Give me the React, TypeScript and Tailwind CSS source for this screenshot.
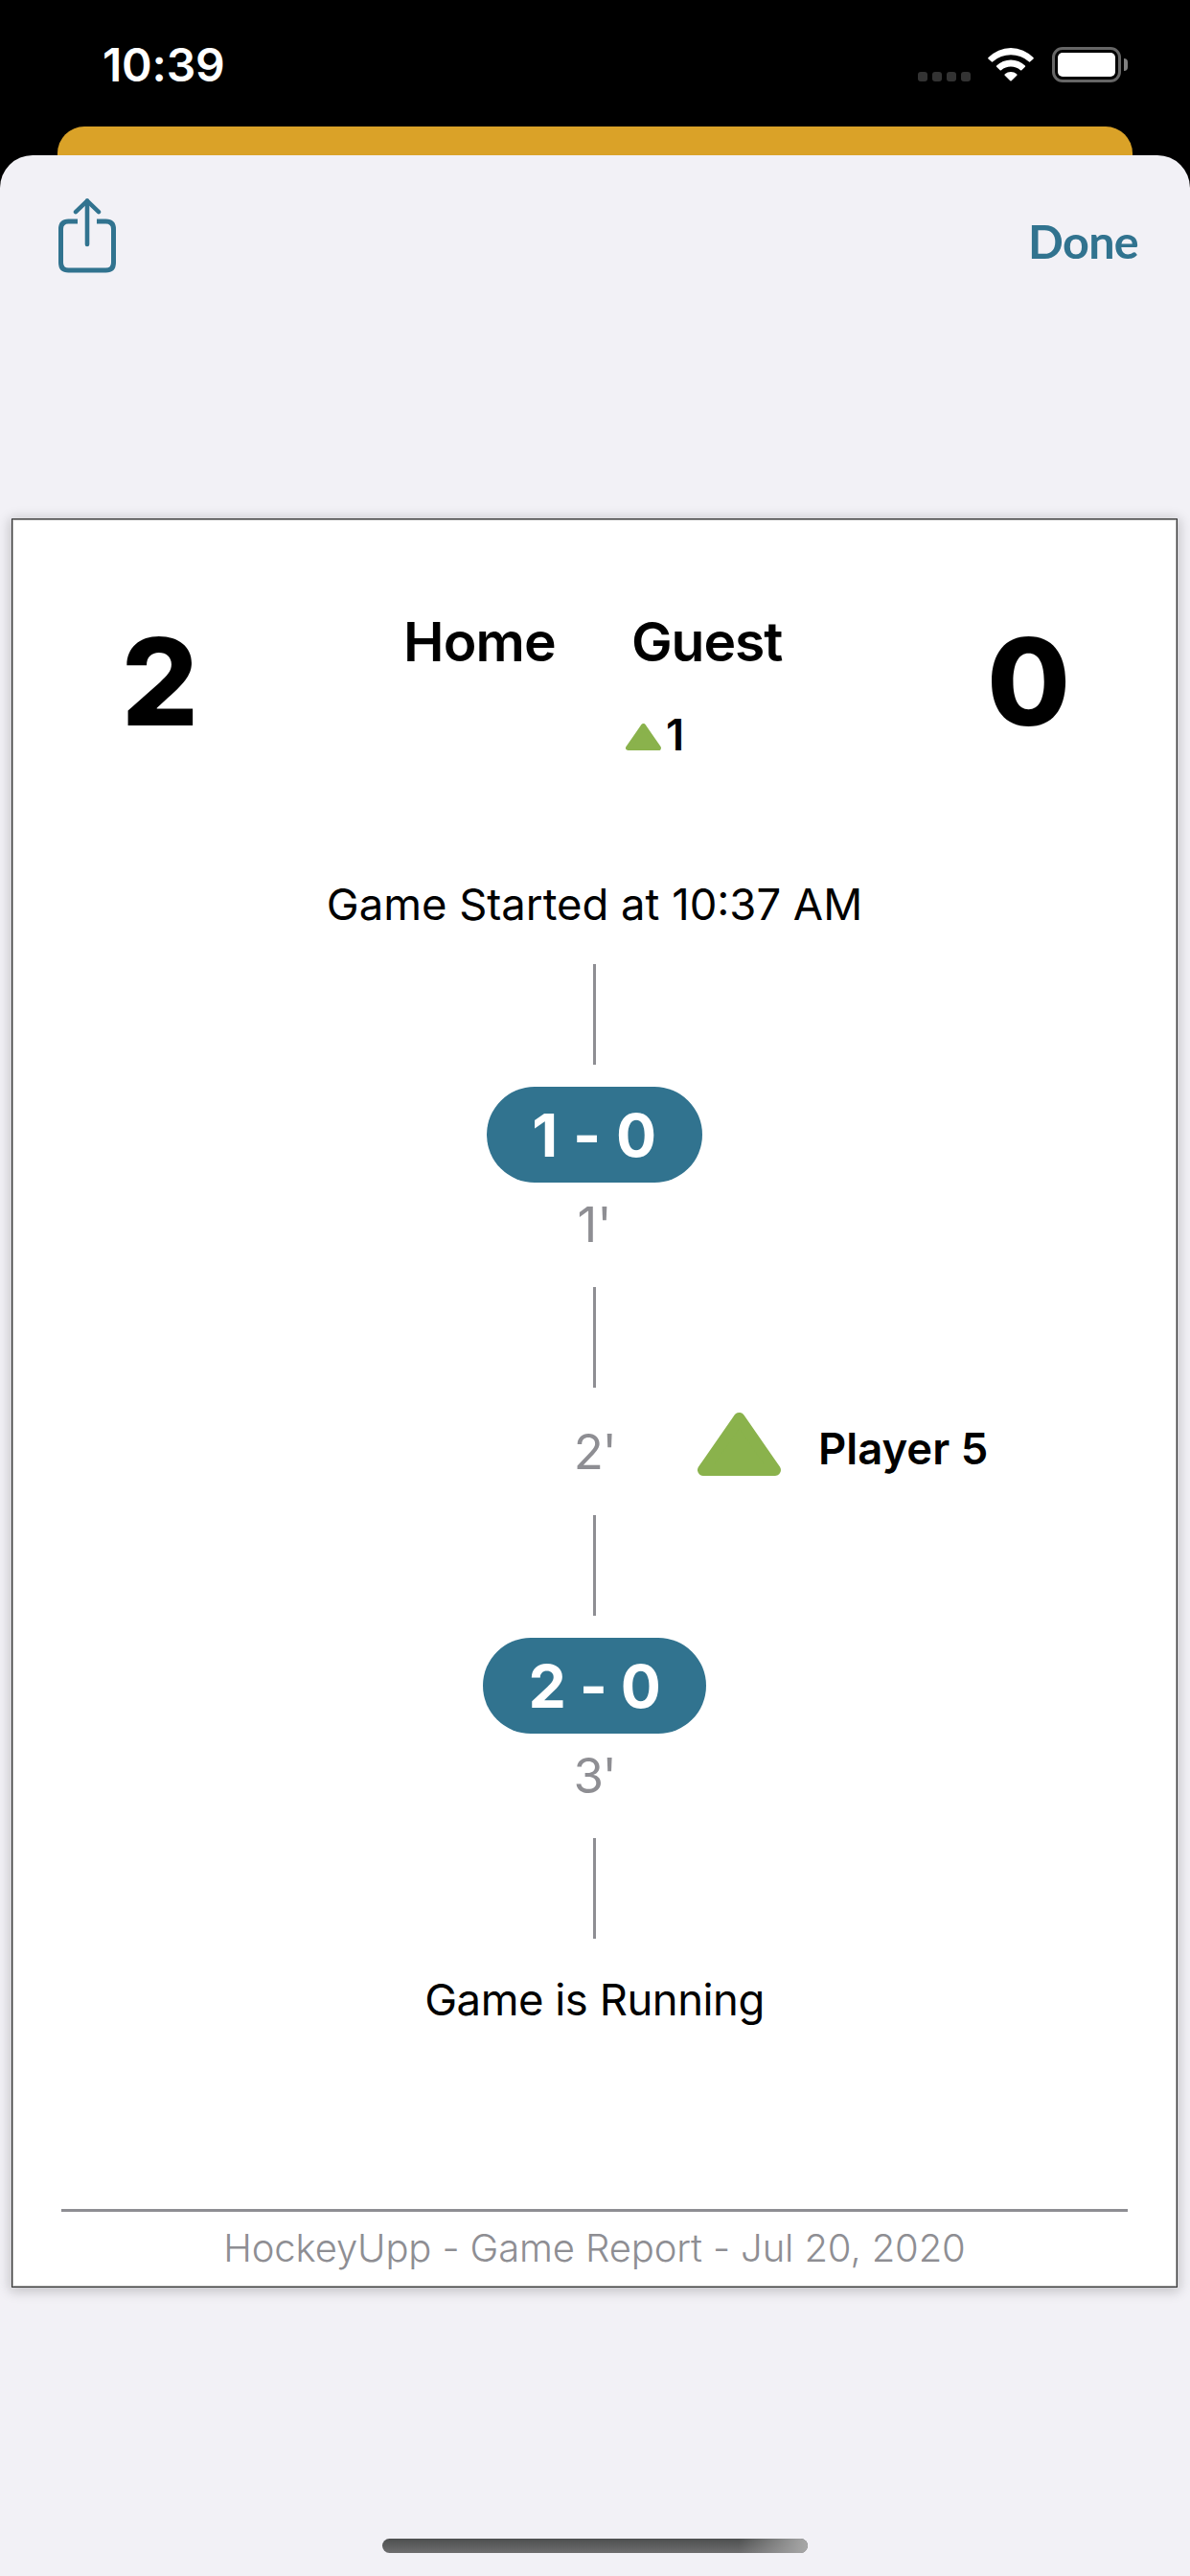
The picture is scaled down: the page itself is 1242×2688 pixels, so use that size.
function WifiIcon() {
  return (
    <svg viewBox="0 0 48 37" className="h-[37px] w-12" fill="white">
      <path d="M.5 11.1A32.5 32.5 0 0 1 47.5 11.1Q48.1 11.8 47.5 12.4L44 15.4Q43.3 15.9 42.7 15.3A28.5 28.5 0 0 0 5.3 15.3Q4.7 15.9 4 15.4L.5 12.4Q-.1 11.8 .5 11.1Z" />
      <path d="M9.1 19.5A21.5 21.5 0 0 1 38.9 19.5Q39.5 20.2 38.9 20.8L35.3 24.3Q34.7 24.7 34 24.2A15.6 15.6 0 0 0 14 24.2Q13.3 24.7 12.7 24.3L9.1 20.8Q8.5 20.2 9.1 19.5Z" />
      <path d="M17.8 28.3A9.6 9.6 0 0 1 30.2 28.3Q31 29 30.3 29.8L24.7 35.3Q24 35.9 23.3 35.3L17.7 29.8Q17 29 17.8 28.3Z" />
    </svg>
  );
}

function ShareIcon() {
  return (
    <svg viewBox="0 0 60 78" className="h-[78px] w-[60px]" fill="none" stroke="#31738f" strokeWidth="5">
      <path d="M20 24.1H10.5Q2.5 24.1 2.5 32.1V66.9Q2.5 74.9 10.5 74.9H49.5Q57.5 74.9 57.5 66.9V32.1Q57.5 24.1 49.5 24.1H40" />
      <path d="M30 2.6V48" strokeLinecap="round" strokeWidth="4.6" />
      <path d="M18 14.2 30 2.6 42 14.2" strokeLinecap="round" strokeLinejoin="round" strokeWidth="4.4" />
    </svg>
  );
}

function GreenCard({ className }: { className: string }) {
  return (
    <svg viewBox="0 0 87 66" className={className}>
      <path d="M6 60H81L43.5 6Z" fill="#8ab24c" stroke="#8ab24c" strokeWidth="12" strokeLinejoin="round" />
    </svg>
  );
}

function StatusBar() {
  return (
    <div className="flex h-[132px] items-start justify-between pr-[65px] pl-[107px] text-white">
      <span className="pt-[38px] text-[48px] leading-[60px] font-semibold tracking-[-0.2px]">10:39</span>
      <div className="flex pt-[49px]">
        <div className="mt-[26px] mr-[18px] flex gap-[5px]">
          {[0, 1, 2, 3].map((i) => (
            <span key={i} className="size-[10px] rounded-[3px] bg-[#333]" />
          ))}
        </div>
        <WifiIcon />
        <div className="ml-[19px] h-[37px] w-[72px] rounded-[11px] border-[3px] border-[#666] p-[3px]">
          <div className="h-[25px] w-[60px] rounded-[5px] bg-white" />
        </div>
        <div className="mt-[12px] ml-[3px] h-[13px] w-1 rounded-r-full bg-[#808080]" />
      </div>
    </div>
  );
}

function Connector({ className }: { className: string }) {
  return <div className={`h-[105px] w-[3px] shrink-0 bg-[#8e8e93] ${className}`} />;
}

function Score({ text, className }: { text: string; className: string }) {
  return (
    <div
      className={`mt-[23px] flex h-[100px] shrink-0 items-center justify-center rounded-full bg-[#31738f] text-[62.5px] leading-[100px] font-bold text-white ${className}`}
    >
      {text}
    </div>
  );
}

function Time({ label, className = "" }: { label: string; className?: string }) {
  return (
    <div className={`h-[60px] shrink-0 text-center text-[51px] leading-[60px] text-[#8e8e93] ${className}`}>{label}</div>
  );
}

export default function App() {
  return (
    <div className="flex h-[2688px] w-[1242px] flex-col overflow-hidden bg-black font-['Inter',sans-serif]">
      <StatusBar />
      <div className="mx-[60px] h-[30px] shrink-0 rounded-t-[28px] bg-[#daa228]" />
      <div className="flex flex-1 flex-col items-center rounded-t-[34px] bg-[#f2f1f6]">
        <div className="flex h-[379px] w-full items-start justify-between pr-[54px] pl-[61px]">
          <div className="pt-[45px]">
            <ShareIcon />
          </div>
          <span className="pt-[58px] font-['Lato',sans-serif] text-[48.5px] leading-[62px] font-bold tracking-[-0.7px] text-[#31738f]">
            Done
          </span>
        </div>

        <div className="mr-[1px] flex h-[1846px] w-[1217px] shrink-0 flex-col items-center border border-[#333] bg-white text-black shadow-[inset_0_0_0_1px_#b0b0b0,0_2px_12px_2px_rgba(0,0,0,0.2)]">
          <div className="flex h-[372px] w-full shrink-0">
            <div className="w-[308px] pt-[98px] text-center text-[126px] leading-[142px] font-extrabold">2</div>
            <div className="flex w-[259px] justify-end pt-[98px]">
              <span className="text-[57px] leading-[60px] font-semibold tracking-[-0.8px]">Home</span>
            </div>
            <div className="flex flex-1 flex-col pl-[73px]">
              <span className="mt-[98px] ml-[6px] text-[57px] leading-[60px] font-semibold tracking-[-1.1px]">Guest</span>
              <div className="mt-[37px] flex h-[60px] items-start">
                <GreenCard className="mt-[18px] h-[28px] w-[37px]" />
                <span className="ml-[5px] text-[45.4px] leading-[60px] font-semibold">1</span>
              </div>
            </div>
            <div className="w-[309px] pt-[98px] text-center text-[126px] leading-[142px] font-extrabold">0</div>
          </div>

          <div className="h-[60px] shrink-0 text-[45.4px] leading-[60px]">Game Started at 10:37 AM</div>
          <Connector className="mt-[32px]" />
          <Score text="1 - 0" className="w-[225px] tracking-[0.5px]" />
          <Time label="1'" className="mt-[14px]" />
          <Connector className="mt-[35px]" />

          <div className="mt-[24px] grid h-20 w-full shrink-0 grid-cols-[1fr_75px_1fr] items-start">
            <div />
            <Time label="2'" className="mt-[13px] tracking-[-1.5px]" />
            <div className="flex h-full items-start pl-[70px]">
              <GreenCard className="mt-[2px] h-[66px] w-[87px]" />
              <span className="mt-[10px] ml-[39px] text-[45.4px] leading-[60px] font-semibold">Player 5</span>
            </div>
          </div>
          <Connector className="mt-[29px]" />
          <Score text="2 - 0" className="w-[233px] tracking-[-0.5px]" />
          <Time label="3'" className="mt-[14px] tracking-[-1.5px]" />
          <Connector className="mt-[35px]" />
          <div className="mt-[34px] h-[60px] shrink-0 text-[45.4px] leading-[60px] tracking-[-0.45px]">Game is Running</div>

          <div className="mt-auto w-[1113px] shrink-0 border-t-[3px] border-[#8e8e93] pt-[8px] pb-[10px] text-center text-[40px] leading-[60px] font-light tracking-[-0.13px] text-[#8e8e93]">
            HockeyUpp - Game Report - Jul 20, 2020
          </div>
        </div>

        <div className="mt-auto mb-6 h-[15px] w-[444px] overflow-hidden rounded-full bg-linear-to-b from-[#4d4f4f] to-[#6e6e6f]">
          <div className="ml-auto h-full w-[72px] bg-linear-to-r from-[#a8a8a8]/0 to-[#a8a8a8]" />
        </div>
      </div>
    </div>
  );
}
